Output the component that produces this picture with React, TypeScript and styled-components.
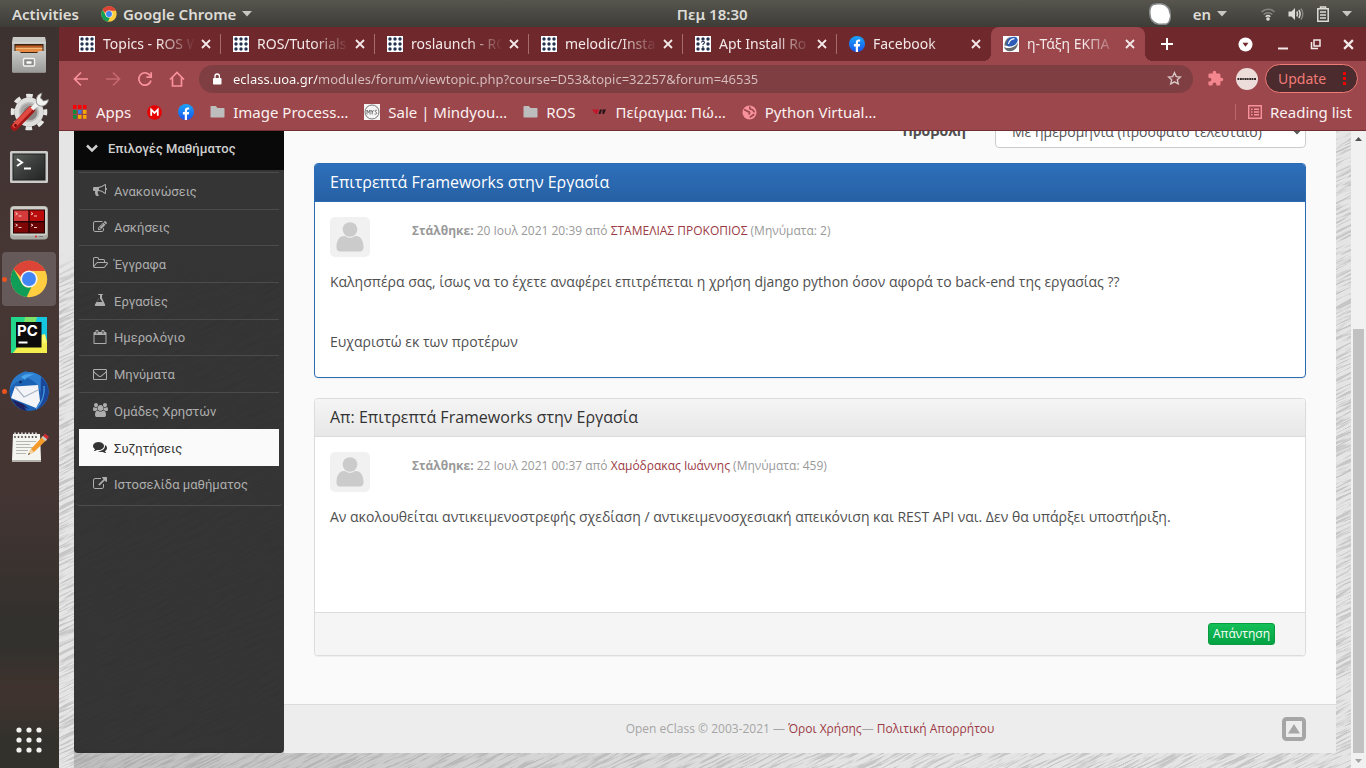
import React from "react";
import styled, { createGlobalStyle, css } from "styled-components";

const pageFont = `"Open Sans", "Noto Sans", sans-serif`;
const uiFont = `"Noto Sans", "Open Sans", sans-serif`;
const menuFont = `Roboto, "Noto Sans", sans-serif`;

const GlobalStyle = createGlobalStyle`
  *, *::before, *::after { box-sizing: border-box; }
  body { margin: 0; font-family: ${uiFont}; }
  button, input, select { font: inherit; color: inherit; }
  button { padding: 0; border: 0; background: none; }
  svg { display: block; flex: none; }
`;

const Desktop = styled.div`
  display: flex;
  flex-direction: column;
  height: 100vh;
  overflow: hidden;
`;

/* ---------- system bar ---------- */

const SystemBar = styled.header`
  display: grid;
  grid-template-columns: 11fr auto 10fr;
  align-items: center;
  flex: none;
  height: 27px;
  padding: 0 14px 0 12px;
  background: linear-gradient(#57554e, #3d3c37);
  color: #dedcd7;
  font-size: 15px;
  font-weight: 600;
  line-height: 20px;
`;

const BarGroup = styled.div<{ $end?: boolean }>`
  display: flex;
  align-items: center;
  gap: 22px;
  justify-content: ${(p) => (p.$end ? "flex-end" : "flex-start")};
`;

const BarButton = styled.button`
  display: flex;
  align-items: center;
  gap: 6px;
  font-weight: 600;
`;

const Tray = styled.button`
  display: flex;
  align-items: center;
  gap: 12px;
  margin-left: 11px;
`;

/* ---------- dock ---------- */

const Workspace = styled.div`
  display: flex;
  flex: 1;
  min-height: 0;
`;

const Dock = styled.nav`
  display: flex;
  flex-direction: column;
  gap: 2px;
  flex: none;
  width: 59px;
  padding: 1px 3px 0 2px;
  background: linear-gradient(
    #3c3230 0%,
    #463634 30%,
    #443533 62%,
    #33312d 80%,
    #33312d 84%,
    #40332f 90%,
    #33312c 96%
  );
`;

const DockItem = styled.button<{ $active?: boolean; $running?: boolean; $last?: boolean }>`
  position: relative;
  display: grid;
  place-items: center;
  height: 54px;
  border-radius: 4px;
  ${(p) => p.$active && css`background: #655959;`}
  ${(p) => p.$last && css`margin-top: auto; margin-bottom: 1px;`}
  ${(p) =>
    p.$running &&
    css`
      &::before {
        content: "";
        position: absolute;
        left: 0;
        top: 25px;
        width: 5px;
        height: 5px;
        border-radius: 50%;
        background: #e95420;
      }
    `}
`;

/* ---------- browser ---------- */

const Browser = styled.div`
  display: flex;
  flex-direction: column;
  flex: 1;
  min-width: 0;
`;

const TabStrip = styled.div`
  display: flex;
  align-items: center;
  flex: none;
  height: 34px;
  padding: 0 9px 0 8px;
  background: #6f282c;
  color: #f3e9e9;
`;

const Tab = styled.div<{ $active?: boolean; $divider?: boolean }>`
  display: flex;
  align-items: center;
  flex: 0 1 154px;
  min-width: 0;
  height: 34px;
  padding: 0 5px 0 12px;
  ${(p) =>
    p.$divider &&
    css`
      background: linear-gradient(#a56c6e, #a56c6e) right 0 center / 1px 20px no-repeat;
    `}
  ${(p) =>
    p.$active &&
    css`
      position: relative;
      background: #9b474c;
      border-radius: 8px 8px 0 0;
      &::before,
      &::after {
        content: "";
        position: absolute;
        bottom: 0;
        width: 8px;
        height: 8px;
      }
      &::before {
        left: -8px;
        background: radial-gradient(circle at 0 0, transparent 8px, #9b474c 8px);
      }
      &::after {
        right: -8px;
        background: radial-gradient(circle at 100% 0, transparent 8px, #9b474c 8px);
      }
    `}
`;

const TabTitle = styled.button`
  display: flex;
  align-items: center;
  gap: 8px;
  flex: 1;
  min-width: 0;
  text-align: left;
  font-size: 14px;
  line-height: 20px;
`;

const FadedText = styled.span`
  flex: 1;
  overflow: hidden;
  white-space: nowrap;
  mask-image: linear-gradient(to right, #000 calc(100% - 36px), transparent);
`;

const CloseTab = styled.button`
  display: grid;
  place-items: center;
  flex: none;
  width: 20px;
  height: 20px;
  margin-left: 1px;
`;

const NewTab = styled.button`
  display: grid;
  place-items: center;
  width: 28px;
  height: 28px;
  margin-left: 8px;
`;

const WindowControls = styled.div`
  display: flex;
  align-items: center;
  gap: 16px;
  margin-left: auto;
`;

const ControlButton = styled.button<{ $wide?: boolean }>`
  display: grid;
  place-items: center start;
  justify-items: ${(p) => (p.$wide ? "start" : "center")};
  width: ${(p) => (p.$wide ? 20 : 17)}px;
  height: 17px;
`;

const Toolbar = styled.div`
  display: flex;
  align-items: center;
  flex: none;
  height: 35px;
  padding: 0 8px 0 14px;
  background: #9b474c;
  color: #f9919a;
`;

const NavButtons = styled.div`
  display: flex;
  gap: 16px;
  margin-right: 14px;
`;

const Omnibox = styled.div`
  display: flex;
  align-items: center;
  flex: 1;
  height: 28px;
  padding: 0 11px 0 12px;
  border-radius: 14px;
  background: #7f3f42;
  color: #e6d6d6;
`;

const Address = styled.input`
  flex: 1;
  min-width: 0;
  margin-left: 10px;
  padding: 0;
  border: 0;
  outline: 0;
  font-size: 13px;
  line-height: 20px;
  color: transparent;
  background: linear-gradient(to right, #ffffff 84px, #d8bfc0 84px);
  background-clip: text;
`;

const Extensions = styled.div`
  display: flex;
  align-items: center;
  gap: 12px;
  margin: 0 7px 0 14px;
`;

const UpdateButton = styled.button`
  display: flex;
  align-items: center;
  justify-content: space-between;
  width: 93px;
  height: 29px;
  padding: 0 11px 0 12px;
  border: 1px solid #f27b76;
  border-radius: 15px;
  background: #4b2b2d;
  color: #ef7b76;
  font-size: 14px;
`;

const Bookmarks = styled.nav`
  display: flex;
  align-items: center;
  gap: 16px;
  flex: none;
  height: 35px;
  padding: 0 14px 2px;
  border-bottom: 1px solid #712f34;
  background: #9b474c;
`;

const Bookmark = styled.a<{ $reading?: boolean }>`
  display: flex;
  align-items: center;
  gap: 8px;
  color: #fbf1f1;
  font-size: 15px;
  line-height: 20px;
  text-decoration: none;
  white-space: nowrap;
  ${(p) =>
    p.$reading &&
    css`
      margin-left: auto;
      padding-left: 12px;
      border-left: 1px solid #bb686c;
      line-height: 16px;
    `}
`;

/* ---------- web page ---------- */

const Viewport = styled.div`
  position: relative;
  display: flex;
  flex: 1;
  min-height: 0;
  overflow: hidden;
  background: #e5e5e5;
`;

const Texture = styled.svg`
  position: absolute;
  inset: 0;
  width: 100%;
  height: 100%;
`;

const Page = styled.div`
  position: relative;
  display: flex;
  flex: 1;
  min-width: 0;
  padding: 0 15px 15px;
`;

const Sidebar = styled.aside`
  flex: none;
  width: 210px;
  border-radius: 0 0 4px 4px;
  background: rgba(43, 43, 43, 0.95);
  font-family: ${menuFont};
  font-size: 13px;
`;

const MenuHeading = styled.button`
  display: flex;
  align-items: center;
  gap: 10px;
  width: 100%;
  height: 39px;
  padding: 0 12px 5px;
  background: #090909;
  color: #cfcfcf;
  font-size: 13px;
  font-weight: 500;
`;

const MenuList = styled.ul`
  display: grid;
  grid-auto-rows: 1fr;
  height: 336px;
  margin: 0 2px;
  padding: 2px 3px 3px;
  border-bottom: 1px solid #4d4d4d;
  border-radius: 0 0 4px 4px;
  list-style: none;
`;

const MenuLink = styled.a<{ $active?: boolean }>`
  display: flex;
  align-items: center;
  gap: 6px;
  height: 100%;
  padding: 2px 14px 0;
  border-top: 1px solid #4b4b4b;
  color: #adadad;
  line-height: 20px;
  text-decoration: none;
  ${(p) =>
    p.$active &&
    css`
      position: relative;
      height: calc(100% + 1px);
      border-color: #fafafa;
      background: #fafafa;
      color: #333;
    `}
`;

const Content = styled.div`
  display: flex;
  flex-direction: column;
  flex: 1;
  min-width: 0;
  overflow: hidden;
  border-radius: 0 0 4px 0;
  background: #fafafa;
  color: #4f4f4f;
  font-family: ${pageFont};
  font-size: 14px;
  line-height: 20px;
`;

const Topic = styled.main`
  flex: 1;
  padding: 0 30px;
`;

/* The page is scrolled, so the top half of this row is above the visible area. */
const ViewMode = styled.div`
  display: flex;
  justify-content: flex-end;
  align-items: center;
  gap: 29px;
  margin: -17px 0 15px;
  label {
    font-weight: 700;
  }
`;

const ModeSelect = styled.select`
  width: 311px;
  height: 34px;
  padding: 6px 12px;
  border: 1px solid #ccc;
  border-radius: 4px;
  background-color: #fff;
  color: #555;
  font-size: 14px;
`;

const Post = styled.article<{ $primary?: boolean }>`
  margin-bottom: 20px;
  border: 1px solid ${(p) => (p.$primary ? "#2b6cb4" : "#dcdcdc")};
  border-radius: 4px;
  background: #fff;
  box-shadow: 0 1px 1px rgba(0, 0, 0, 0.05);
  overflow: hidden;
`;

const PostTitle = styled.h3<{ $primary?: boolean }>`
  margin: 0;
  height: 38px;
  padding: 0 15px;
  border-bottom: 1px solid ${(p) => (p.$primary ? "#2b6cb4" : "#dcdcdc")};
  background: ${(p) =>
    p.$primary ? "linear-gradient(#2d70bb, #2760a4)" : "linear-gradient(#f5f5f5, #e7e7e7)"};
  color: ${(p) => (p.$primary ? "#fff" : "#333")};
  font-size: 16px;
  font-weight: 400;
  line-height: 36px;
`;

const PostBody = styled.div<{ $tall?: boolean }>`
  padding: 15px 15px ${(p) => (p.$tall ? 85 : 25)}px;
  p {
    margin: 0 0 40px;
  }
  p:last-child {
    margin: 0;
  }
`;

const PostInfo = styled.div`
  display: flex;
  gap: 42px;
  margin-bottom: 15px;
  color: #999;
  font-size: 12px;
  line-height: 28px;
`;

const PostFooter = styled.footer`
  display: flex;
  justify-content: flex-end;
  padding: 10px 30px;
  border-top: 1px solid #dcdcdc;
  background: #f5f5f5;
`;

const ReplyButton = styled.button`
  height: 22px;
  padding: 0 4px;
  border: 1px solid #0a9a3f;
  border-radius: 3px;
  background: linear-gradient(#14bf58, #04a244);
  color: #fff;
  font-size: 12px;
  line-height: 20px;
`;

const RedLink = styled.a`
  color: #9b3a44;
  text-decoration: none;
`;

const SiteFooter = styled.footer`
  display: grid;
  grid-template-columns: 24px 1fr 24px;
  align-items: center;
  height: 49px;
  padding: 0 30px;
  border-top: 1px solid #dcdcdc;
  background: #ededed;
  color: #a5a5a5;
  font-size: 12px;
  text-align: center;
`;

const ScrollBar = styled.div`
  position: relative;
  display: flex;
  flex-direction: column;
  flex: none;
  width: 15px;
  background: #f1f1f1;
`;

const ScrollButton = styled.button`
  display: grid;
  place-items: center;
  flex: none;
  width: 15px;
  height: 15px;
`;

const ScrollSpace = styled.div`
  flex: 183;
`;

const ScrollThumb = styled.div`
  flex: 424;
  margin: 0 2px;
  background: #c1c1c1;
`;

/* ---------- drawings ---------- */

const Caret = () => (
  <svg width="10" height="6" viewBox="0 0 10 6" fill="#c9c7c2"><path d="M0 0h10L5 5.5z" /></svg>
);

const ChromeLogo = ({ size }: { size: number }) => (
  <svg width={size} height={size} viewBox="0 0 48 48">
    <circle cx="24" cy="24" r="23" fill="#ffcd40" />
    <path d="M4.600 11.500A23 23 0 0 1 44.300 13.500H24a10.500 10.500 0 0 0-9.500 6z" fill="#db4437" />
    <path d="M4.600 11.500 14.900 29.250A10.500 10.500 0 0 0 27 34L21 46.800A23 23 0 0 1 4.600 11.500z" fill="#0f9d58" />
    <path d="M4.600 11.500A23 23 0 0 1 44.300 13.500H24c-5 0-9 3-10.300 8z" fill="#db4437" />
    <circle cx="24" cy="24" r="10.800" fill="#f4f4f4" />
    <circle cx="24" cy="24" r="8.800" fill="#4285f4" />
  </svg>
);

const RosIcon = ({ question }: { question?: boolean }) => (
  <svg width="16" height="16" viewBox="0 0 16 16">
    <rect width="16" height="16" fill="#fff" />
    {[3, 8, 13].map((y) =>
      [3, 8, 13].map((x) =>
        question && x === 8 && y === 8 ? null : (
          <circle key={`${x}-${y}`} cx={x} cy={y} r="1.700" fill="#22314e" />
        )
      )
    )}
    {question && (
      <path d="M6.500 6.500q0-1.300 1.500-1.300t1.500 1.300q0 .8-1.500 1.700v.8M8 10v1.200" fill="none" stroke="#22314e" strokeWidth="1.100" />
    )}
  </svg>
);

const FacebookIcon = () => (
  <svg width="16" height="16" viewBox="0 0 16 16">
    <defs>
      <linearGradient id="fb" x2="0" y2="1">
        <stop stopColor="#19a5fb" />
        <stop offset="1" stopColor="#1a54ea" />
      </linearGradient>
    </defs>
    <circle cx="8" cy="8" r="8" fill="url(#fb)" />
    <path d="M6.800 16v-5.600H4.900V8.100h1.900V6.600c0-2.100 1.200-3.200 3-3.200.7 0 1.400.1 1.400.1v1.900h-1c-.9 0-1.200.6-1.200 1.200v1.500h2.100l-.4 2.300H9V16z" fill="#fff" />
  </svg>
);

const EclassIcon = () => (
  <svg width="16" height="16" viewBox="0 0 16 16">
    <rect width="16" height="16" fill="#fff" />
    <path d="M2.500 9C2 4.500 6 .8 11 .8c3.500 0 4.500 3 3 5.700-1.500 2.600-5 4.300-8.500 4z" fill="#2c5cb8" />
    <path d="M5.500 8C6 5 8.500 2.800 11.500 2.600" fill="none" stroke="#fff" strokeWidth="1.100" />
    <path d="M1 10.500c1.500 1.500 4 1.800 7 1.200 3-.7 5.500-2.500 7-5-.3 4.800-3.500 8.300-8 8.500-3 .1-5.500-1.500-6-4.700z" fill="#63696d" />
    <path d="M1.500 9.500C1.500 5 4 1.500 8 .7 5 2.500 3.200 5.500 3.500 10z" fill="#63696d" />
  </svg>
);

const CrossIcon = ({ size = 10, width = 1.8 }: { size?: number; width?: number }) => (
  <svg width={size} height={size} viewBox="0 0 10 10" stroke="currentColor" strokeWidth={width} fill="none">
    <path d="M1 1l8 8M9 1l-8 8" />
  </svg>
);

const FolderIcon = () => (
  <svg width="15" height="14" viewBox="0 0 15 14" fill="#bdbdbd">
    <path d="M1.500 1h4.300l1.700 2h6c.6 0 1 .4 1 1v7.500c0 .6-.4 1-1 1h-12c-.6 0-1-.4-1-1V2c0-.6.4-1 1-1z" />
  </svg>
);

const AppsIcon = () => {
  const colors = ["#f00", "#f00", "#f00", "#0a8f3c", "#3b78e7", "#f5a800", "#0a8f3c", "#f5a800", "#f5a800"];
  return (
    <svg width="15" height="14" viewBox="0 0 15 14">
      {colors.map((c, i) => (
        <rect key={i} x={(i % 3) * 5} y={Math.floor(i / 3) * 5} width="3.500" height="3.800" fill={c} />
      ))}
    </svg>
  );
};

const NavIcon = ({ d, dim }: { d: string; dim?: boolean }) => (
  <svg width="16" height="16" viewBox="0 0 16 16" fill="none" stroke="currentColor" strokeWidth="1.700" opacity={dim ? 0.45 : 1}>
    <path d={d} />
  </svg>
);

const Avatar = () => (
  <svg width="40" height="40" viewBox="0 0 40 40" role="img" aria-label="Χρήστης">
    <rect width="40" height="40" rx="5" fill="#f1f1f1" />
    <circle cx="20" cy="12.500" r="7.300" fill="#cbcbcb" />
    <path d="M6.500 30c0-6.500 3-11 7.500-11 2 0 2.500 1.700 6 1.700s4-1.700 6-1.700c4.500 0 7.500 4.500 7.500 11 0 3.500-1.500 4.500-4 4.500h-19c-2.500 0-4-1-4-4.500z" fill="#cbcbcb" />
  </svg>
);

const FilesIcon = () => (
  <svg width="40" height="40" viewBox="0 0 40 40">
    <defs>
      <linearGradient id="metal" x2="0" y2="1">
        <stop stopColor="#c9c9c7" />
        <stop offset="1" stopColor="#9a9a98" />
      </linearGradient>
    </defs>
    <path d="M4 2h32l1 7v27a1.500 1.500 0 0 1-1.500 1.500h-31A1.500 1.500 0 0 1 3 36V9z" fill="#b9b9b6" />
    <path d="M4 2h32l1 6H3z" fill="#c9c9c7" />
    <path d="M3 8h34" stroke="#dededc" />
    <rect x="5.500" y="9" width="29" height="9" fill="#3c2412" />
    <path d="M6.500 10.500h27v2h-27z" fill="#c65a1c" />
    <path d="M6.500 12.500h27v1.500h-27z" fill="#f6b878" />
    <path d="M6.500 14h27v3h-27z" fill="#e48a45" />
    <path d="M3 16h7l2 2h16l2-2h7v20.500a1 1 0 0 1-1 1H4a1 1 0 0 1-1-1z" fill="url(#metal)" />
    <rect x="14.500" y="23.500" width="11" height="7.500" rx="1" fill="#8c8c8a" stroke="#f4f4f2" strokeWidth="1.400" />
    <path d="M17.500 27.500h5" stroke="#fff" strokeWidth="2.400" />
  </svg>
);

const ToolsIcon = () => (
  <svg width="40" height="40" viewBox="0 0 40 40">
    <circle cx="20" cy="21" r="16.300" fill="none" stroke="#e6e6e4" strokeWidth="4" strokeDasharray="6.600 6.200" strokeDashoffset="3.300" />
    <circle cx="20" cy="21" r="14.500" fill="#dededc" />
    <circle cx="20" cy="21" r="9.500" fill="#a7a5a3" stroke="#c3c3c1" strokeWidth="1.500" />
    <circle cx="21" cy="22" r="7" fill="#8a8482" />
    <path d="M5.500 36 22 19" stroke="#a31816" strokeWidth="7.500" strokeLinecap="round" />
    <path d="M5.500 34.500 21.500 18" stroke="#e04a42" strokeWidth="4.500" strokeLinecap="round" />
    <path d="M23 18l7-7" stroke="#f0f0ee" strokeWidth="4" />
    <path d="M28 13c-2-5 0-10 5-11l-1.500 5 3 3 5-1.500c-.5 5-5 8-9.500 6z" fill="#f2f2f0" stroke="#777573" strokeWidth=".8" />
    <circle cx="6.500" cy="34.500" r="1.400" fill="#6f0b0b" />
  </svg>
);

const TerminalIcon = () => (
  <svg width="40" height="34" viewBox="0 0 40 34">
    <defs>
      <linearGradient id="screen" x2="1" y2="1">
        <stop stopColor="#5b5f5c" />
        <stop offset=".5" stopColor="#3a3d3b" />
        <stop offset="1" stopColor="#232524" />
      </linearGradient>
    </defs>
    <rect x="1" y="1" width="38" height="32" rx="1.500" fill="#cbcbc9" />
    <rect x="3.500" y="3.500" width="33" height="27" fill="#1d1f1e" />
    <rect x="4.500" y="4.500" width="31" height="25" fill="url(#screen)" />
    <path d="M8 9l5 3.500-5 3.500M15 18.500h7" stroke="#fff" strokeWidth="2" fill="none" />
  </svg>
);

const TerminatorIcon = () => (
  <svg width="40" height="36" viewBox="0 0 40 36">
    <rect x="1" y="1" width="38" height="33.500" rx="4" fill="#a9aaa4" />
    <rect x="2" y="1.500" width="36" height="29" rx="3" fill="#cfcfca" />
    <rect x="4" y="4.500" width="32" height="24" fill="#250303" />
    <rect x="5" y="5.500" width="14.300" height="10.500" fill="#d43a3a" />
    <rect x="20.700" y="5.500" width="14.300" height="10.500" fill="#bb0c0c" />
    <rect x="5" y="17.500" width="14.300" height="10" fill="#7e0606" />
    <rect x="20.700" y="17.500" width="14.300" height="10" fill="#6a0404" />
    <g stroke="#ffdede" strokeWidth=".9" fill="none">
      <path d="M6.500 7.500l2 1.200-2 1.200M9.500 11h3M22 7.500l2 1.200-2 1.200M25 11h3M6.500 19l2 1.200-2 1.200M9.500 22.500h3M22 19l2 1.200-2 1.200M25 22.500h3" />
    </g>
    <circle cx="27" cy="31.500" r="1" fill="#d22" />
    <path d="M30 31.500h4" stroke="#777" />
  </svg>
);

const PyCharmIcon = () => (
  <svg width="36" height="36" viewBox="0 0 36 36">
    <rect width="36" height="36" fill="#21d789" />
    <path d="M20 0h16v22L26 14z" fill="#14c6e0" />
    <path d="M14 0h12l-2 8-12 2z" fill="#7fe06a" />
    <path d="M30 20l6 4v12H2l6-8z" fill="#f3ee4e" />
    <path d="M30 18l4-1 2 8-4 2z" fill="#f9f871" />
    <rect x="5" y="5" width="25.500" height="25.500" fill="#0b0b0b" />
    <text x="6" y="19" fill="#fff" fontFamily="Inter, sans-serif" fontSize="15" fontWeight="700">PC</text>
    <rect x="7.500" y="24.500" width="9" height="2" fill="#fff" />
  </svg>
);

const ThunderbirdIcon = () => (
  <svg width="42" height="42" viewBox="0 0 42 42">
    <circle cx="21" cy="21.500" r="19.500" fill="#1c62b4" />
    <path d="M20 2c11 0 20 8 20.500 19C41 31 34 38 26 40.500c5-4 8-9 7-16C31 13 24 8 12 6z" fill="#2f7fd0" />
    <path d="M33 7c6 5 9 12 7 20-2 6-7 11-14 13.500 5-6 7-11 6.500-17z" fill="#1b479a" />
    <path d="M36 16c1 8-2 17-8 23" fill="none" stroke="#3f95e0" strokeWidth="1.500" />
    <path d="M2 20C2 11 8 4 17 1.500 19 1 20 2 18 4c-2 1-3 3-3 6-6 1-11 4-13 10z" fill="#2a78c6" />
    <path d="M13 7c3-2.500 8-4 14-2-4 0-8 1.500-10 5z" fill="#4ba3ea" />
    <circle cx="12.500" cy="12" r="1.200" fill="#0c2350" />
    <path d="M7 16.500l23-1.500 2 16-4 7L3 28z" fill="#f3f4f8" />
    <path d="M7 16.500l9 10.500 14-7" fill="none" stroke="#aab4c4" strokeWidth="1.200" />
    <path d="M4 29.500c3 6 8 10 15 11.500l-3-4 5 2-6-5z" fill="#20205f" />
  </svg>
);

const NotesIcon = () => (
  <svg width="40" height="36" viewBox="0 0 40 36">
    <path d="M4 5h27l1 26H3z" fill="#f4f4f1" />
    <path d="M3 31h29v2H3z" fill="#b3b3ac" />
    <g stroke="#b7b7b2" strokeWidth="1">
      <path d="M7 12.500h20M7 15.500h14M7 18.500h17M7 21.500h12M7 24.500h10" />
    </g>
    <g stroke="#ececec" strokeWidth="1.500" fill="none">
      <path d="M6 8V3.500M9.500 8V3.500M13 8V3.500M16.500 8V3.500M20 8V3.500M23.500 8V3.500M27 8V3.500" />
    </g>
    <g fill="#4a4644">
      {[6, 9.5, 13, 16.5, 20, 23.5, 27].map((x) => <circle key={x} cx={x} cy="8" r=".9" />)}
    </g>
    <path d="M19 26l3-6L34 7l4 3.500L25 23z" fill="#f39a2b" />
    <path d="M34 7l2-2.500 4 3.500-2 2.500z" fill="#cf2f34" />
    <path d="M32.500 8.500L34 7l4 3.500-1.500 1.700z" fill="#c9c9c9" />
    <path d="M22 20l3 3-6 3z" fill="#eed3a6" />
    <path d="M20 24l1 1-2 1z" fill="#222" />
  </svg>
);

const AppGridIcon = () => (
  <svg width="28" height="28" viewBox="0 0 28 28" fill="#f1f1ef">
    {[4, 14, 24].map((y) => [4, 14, 24].map((x) => <circle key={`${x}-${y}`} cx={x} cy={y} r="2.600" />))}
  </svg>
);

type MenuEntry = { label: string; d: string; box?: number; width?: number; active?: boolean };

const menu: MenuEntry[] = [
  { label: "Ανακοινώσεις", d: "M1664 640q53 0 90.5 37.5t37.5 90.5-37.5 90.5-90.5 37.5v384q0 52-38 90t-90 38q-417-347-812-380-58 19-91 66t-31 100.5 40 92.5q-20 33-23 65.5t6 58 33.5 55 48 50 61.5 50.5q-29 58-111.5 83t-168.5 11.5-132-55.5q-7-23-29.5-87.5t-32-94.5-23-89-15-101 3.5-98.5 22-110.5h-122q-66 0-113-47t-47-113v-192q0-66 47-113t113-47h480q435 0 896-384 52 0 90 38t38 90v384zm-128 604v-954q-394 302-768 343v270q377 42 768 341z" },
  { label: "Ασκήσεις", d: "M888 1184l116-116-152-152-116 116v56h96v96h56zm440-720q-16-16-33 1l-350 350q-17 17-1 33t33-1l350-350q17-17 1-33zm80 594v190q0 119-84.5 203.5t-203.5 84.5h-832q-119 0-203.5-84.5t-84.5-203.5v-832q0-119 84.5-203.5t203.5-84.5h832q63 0 117 25 15 7 18 23 3 17-9 29l-49 49q-14 14-32 8-23-6-45-6h-832q-66 0-113 47t-47 113v832q0 66 47 113t113 47h832q66 0 113-47t47-113v-126q0-13 9-22l64-64q15-15 35-7t20 29zm-96-738l288 288-672 672h-288v-288zm444 132l-92 92-288-288 92-92q28-28 68-28t68 28l152 152q28 28 28 68t-28 68z" },
  { label: "Έγγραφα", box: 1920, width: 15, d: "M1781 803q0-35-53-35h-1088q-40 0-85.5 21.5t-71.5 52.5l-294 363q-18 24-18 40 0 35 53 35h1088q40 0 86-22t71-53l294-363q18-22 18-39zm-1141-163h768v-160q0-40-28-68t-68-28h-576q-40 0-68-28t-28-68v-64q0-40-28-68t-68-28h-320q-40 0-68 28t-28 68v853l256-315q44-53 116-87.5t140-34.5zm1269 163q0 62-46 120l-295 363q-43 53-116 87.5t-140 34.5h-1088q-92 0-158-66t-66-158v-960q0-92 66-158t158-66h320q92 0 158 66t66 158v32h544q92 0 158 66t66 158v160h192q54 0 99 24.5t67 70.5q15 32 15 68z" },
  { label: "Εργασίες", d: "M1527 1447q56 89 21.5 153t-140.5 64h-1024q-106 0-140.5-64t21.5-153l503-793v-399h-64q-26 0-45-19t-19-45 19-45 45-19h512q26 0 45 19t19 45-19 45-45 19h-64v399zm-779-725l-272 430h712l-272-430-20-31v-436h-128v436z" },
  { label: "Ημερολόγιο", d: "M192 1664h1408v-1024h-1408v1024zm384-1216v-288q0-14-9-23t-23-9h-64q-14 0-23 9t-9 23v288q0 14 9 23t23 9h64q14 0 23-9t9-23zm768 0v-288q0-14-9-23t-23-9h-64q-14 0-23 9t-9 23v288q0 14 9 23t23 9h64q14 0 23-9t9-23zm384-64v1280q0 52-38 90t-90 38h-1408q-52 0-90-38t-38-90v-1280q0-52 38-90t90-38h128v-96q0-66 47-113t113-47h64q66 0 113 47t47 113v96h384v-96q0-66 47-113t113-47h64q66 0 113 47t47 113v96h128q52 0 90 38t38 90z" },
  { label: "Μηνύματα", d: "M1664 1504v-768q-32 36-69 66-268 206-426 338-51 43-83 67t-86.5 48.5-102.5 24.5h-2q-48 0-102.5-24.5t-86.500-48.5-83-67q-158-132-426-338-37-30-69-66v768q0 13 9.5 22.5t22.5 9.5h1472q13 0 22.5-9.5t9.500-22.5zm0-1051v-24.5l-.5-13-3-12.5-5.5-9-9-7.5-14-2.5h-1472q-13 0-22.5 9.5t-9.5 22.5q0 168 147 284 193 152 401 317 6 5 35 29.5t46 37.5 44.5 31.5 50.5 27.5 43 9h2q20 0 43-9t50.5-27.5 44.5-31.5 46-37.5 35-29.5q208-165 401-317 54-43 100.5-115.5t46.5-131.5zm128-37v1088q0 66-47 113t-113 47h-1472q-66 0-113-47t-47-113v-1088q0-66 47-113t113-47h1472q66 0 113 47t47 113z" },
  { label: "Ομάδες Χρηστών", box: 1920, width: 15, d: "M593 896q-162 5-265 128h-134q-82 0-138-40.5t-56-118.5q0-353 124-353 6 0 43.5 21t97.5 42.5 119 21.5q67 0 133-23-5 37-5 66 0 139 81 256zm1071 637q0 120-73 189.5t-194 69.5h-874q-121 0-194-69.5t-73-189.5q0-53 3.5-103.5t14-109 26.5-108.5 43-97.5 62-81 85.5-53.5 111.5-20q10 0 43 21.5t73 48 107 48 135 21.5 135-21.5 107-48 73-48 43-21.5q61 0 111.5 20t85.5 53.5 62 81 43 97.5 26.5 108.5 14 109 3.5 103.5zm-1024-1277q0 106-75 181t-181 75-181-75-75-181 75-181 181-75 181 75 75 181zm704 384q0 159-112.5 271.5t-271.5 112.5-271.5-112.5-112.5-271.5 112.5-271.5 271.5-112.5 271.5 112.5 112.5 271.5zm576 225q0 78-56 118.5t-138 40.5h-134q-103-123-265-128 81-117 81-256 0-29-5-66 66 23 133 23 59 0 119-21.5t97.5-42.5 43.5-21q124 0 124 353zm-128-609q0 106-75 181t-181 75-181-75-75-181 75-181 181-75 181 75 75 181z" },
  { label: "Συζητήσεις", active: true, d: "M1408 768q0 139-94 257t-256.5 186.5-353.5 68.5q-86 0-176-16-124 88-278 128-36 9-86 16h-3q-11 0-20.5-8t-11.5-21q-1-3-1-6.5t.5-6.5 2-6l2.5-5 3.5-5.5 4-5 4.5-5 4-4.5q5-6 23-25t26-29.5 22.5-29 25-38.5 20.500-44q-124-72-195-177t-71-224q0-139 94-257t256.5-186.5 353.5-68.5 353.5 68.5 256.5 186.5 94 257zm384 256q0 120-71 224.5t-195 176.5q10 24 20.5 44t25 38.5 22.5 29 26 29.5 23 25q1 1 4 4.5t4.5 5 4 5 3.5 5.5l2.5 5 2 6 .5 6.5-1 6.5q-3 14-13 22t-22 7q-50-7-86-16-154-40-278-128-90 16-176 16-271 0-472-132 58 4 88 4 161 0 309-45t264-129q125-92 192-212t67-254q0-77-23-152 129 71 204 178t75 230z" },
  { label: "Ιστοσελίδα μαθήματος", d: "M1408 928v320q0 119-84.5 203.5t-203.5 84.5h-832q-119 0-203.5-84.5t-84.5-203.5v-832q0-119 84.5-203.5t203.5-84.5h704q14 0 23 9t9 23v64q0 14-9 23t-23 9h-704q-66 0-113 47t-47 113v832q0 66 47 113t113 47h832q66 0 113-47t47-113v-320q0-14 9-23t23-9h64q14 0 23 9t9 23zm384-864v512q0 26-19 45t-45 19-45-19l-176-176-652 652q-10 10-23 10t-23-10l-114-114q-10-10-10-23t10-23l652-652-176-176q-19-19-19-45t19-45 45-19h512q26 0 45 19t19 45z" },
];

const MenuIconCell = styled.span`
  flex: none;
  width: 15px;
  padding-bottom: 3px;
`;

const MenuIcon = ({ d, box = 1792, width = 14 }: MenuEntry) => (
  <MenuIconCell>
    <svg width={width} height="14" viewBox={`0 0 ${box} 1792`} fill="currentColor"><path d={d} /></svg>
  </MenuIconCell>
);

const tabs = [
  { title: "Topics - ROS W", icon: <RosIcon /> },
  { title: "ROS/Tutorials", icon: <RosIcon /> },
  { title: "roslaunch - RO", icon: <RosIcon /> },
  { title: "melodic/Insta", icon: <RosIcon /> },
  { title: "Apt Install Ro", icon: <RosIcon question /> },
  { title: "Facebook", icon: <FacebookIcon /> },
  { title: "η-Τάξη ΕΚΠΑ", icon: <EclassIcon />, active: true },
];

type PostProps = {
  title: string;
  date: string;
  author: string;
  count: number;
  paragraphs: string[];
  primary?: boolean;
  reply?: boolean;
};

const ForumPost = ({ title, date, author, count, paragraphs, primary, reply }: PostProps) => (
  <Post $primary={primary}>
    <PostTitle $primary={primary}>{title}</PostTitle>
    <PostBody $tall={reply}>
      <PostInfo>
        <Avatar />
        <span>
          <b>Στάλθηκε:</b> {date} από <RedLink href="#author">{author}</RedLink> (Μηνύματα: {count})
        </span>
      </PostInfo>
      {paragraphs.map((text) => (
        <p key={text}>{text}</p>
      ))}
    </PostBody>
    {reply && (
      <PostFooter>
        <ReplyButton type="button">Απάντηση</ReplyButton>
      </PostFooter>
    )}
  </Post>
);

const BackgroundTexture = () => (
  <Texture aria-hidden="true">
    <defs>
      <filter id="scratches" x="0" y="0" width="100%" height="100%">
        <feTurbulence type="fractalNoise" baseFrequency="0.03 0.55" numOctaves="4" seed="7" />
        <feColorMatrix values="0 0 0 0 .52  0 0 0 0 .52  0 0 0 0 .52  6 0 0 0 -2.800" />
      </filter>
      <linearGradient id="calm" x2="0" y2="1">
        <stop offset=".19" stopColor="#e5e5e5" />
        <stop offset=".24" stopColor="#e5e5e5" stopOpacity="0" />
      </linearGradient>
      <linearGradient id="shade">
        <stop stopColor="#8f8f8f" stopOpacity=".45" />
        <stop offset="1" stopColor="#8f8f8f" stopOpacity="0" />
      </linearGradient>
    </defs>
    <g transform="rotate(-26)">
      <rect x="-500" y="-100" width="2000" height="1500" filter="url(#scratches)" opacity=".8" />
    </g>
    <rect width="225" height="100%" fill="url(#calm)" />
    <rect x="15" y="97%" width="60%" height="3%" fill="url(#shade)" />
  </Texture>
);

export default function App() {
  return (
    <Desktop>
      <GlobalStyle />
      <SystemBar>
        <BarGroup>
          <BarButton type="button">Activities</BarButton>
          <BarButton type="button">
            <ChromeLogo size={16} />
            Google Chrome
            <Caret />
          </BarButton>
        </BarGroup>
        <span>Πεμ 18:30</span>
        <BarGroup $end>
          <svg width="22" height="22" viewBox="0 0 22 22">
            <path d="M7 1c3-1 4 0 6 0 5 1 8 5 8 9 1 2 1 4 0 6 0 3-3 6-6 5-2 1-4 0-6 0-5-1-8-5-8-9C0 5 2 1 7 1z" fill="#fff" stroke="#85888a" strokeWidth="1.600" />
          </svg>
          <BarButton type="button">en <Caret /></BarButton>
          <Tray type="button" aria-label="System menu">
            <svg width="16" height="14" viewBox="0 0 16 14" fill="none" strokeWidth="1.600">
              <path d="M1.500 5a9 9 0 0 1 13 0M3.700 7.500a6 6 0 0 1 8.600 0" stroke="#85837e" />
              <path d="M5.700 9.800a3.300 3.300 0 0 1 4.600 0" stroke="#dedcd7" />
              <circle cx="8" cy="12" r="1.800" fill="#dedcd7" />
            </svg>
            <svg width="16" height="14" viewBox="0 0 16 14" fill="none" strokeWidth="1.500">
              <path d="M.5 4.500h3L7 1v12L3.500 9.500h-3z" fill="#dedcd7" />
              <path d="M8.800 4.500q1.500 2.500 0 5M10.800 3q2.600 4 0 8" stroke="#dedcd7" />
              <path d="M13 1.500q3.500 5.500 0 11" stroke="#85837e" />
            </svg>
            <svg width="14" height="16" viewBox="0 0 14 16" fill="none" stroke="#dedcd7" strokeWidth="1.500">
              <path d="M4.500 2.500V1h5v1.500M1.800 2.800h10.400v12.400H1.800zM4 6h6M4 9h6M4 12h6" />
            </svg>
            <Caret />
          </Tray>
        </BarGroup>
      </SystemBar>

      <Workspace>
        <Dock aria-label="Dock">
          <DockItem type="button" aria-label="Files"><FilesIcon /></DockItem>
          <DockItem type="button" aria-label="Settings"><ToolsIcon /></DockItem>
          <DockItem type="button" aria-label="Terminal"><TerminalIcon /></DockItem>
          <DockItem type="button" aria-label="Terminator"><TerminatorIcon /></DockItem>
          <DockItem type="button" aria-label="Google Chrome" $active $running><ChromeLogo size={38} /></DockItem>
          <DockItem type="button" aria-label="PyCharm"><PyCharmIcon /></DockItem>
          <DockItem type="button" aria-label="Thunderbird" $running><ThunderbirdIcon /></DockItem>
          <DockItem type="button" aria-label="Text editor"><NotesIcon /></DockItem>
          <DockItem type="button" aria-label="Show applications" $last><AppGridIcon /></DockItem>
        </Dock>

        <Browser>
          <TabStrip>
            {tabs.map((tab, i) => (
              <Tab key={tab.title} $active={tab.active} $divider={i < 5}>
                <TabTitle type="button">
                  {tab.icon}
                  <FadedText>{tab.title}</FadedText>
                </TabTitle>
                <CloseTab type="button" aria-label="Close tab"><CrossIcon /></CloseTab>
              </Tab>
            ))}
            <NewTab type="button" aria-label="New tab">
              <svg width="12" height="12" viewBox="0 0 12 12" stroke="#fff" strokeWidth="2"><path d="M6 0v12M0 6h12" /></svg>
            </NewTab>
            <WindowControls>
              <ControlButton type="button" aria-label="Search tabs" $wide>
                <svg width="15" height="15" viewBox="0 0 15 15"><circle cx="7.500" cy="7.500" r="7" fill="#fff" /><path d="M4.500 5.800h6l-3 4z" fill="#6f282c" /></svg>
              </ControlButton>
              <ControlButton type="button" aria-label="Minimize">
                <svg width="10" height="11" viewBox="0 0 10 11"><path d="M0 8.500h10v2H0z" fill="#f3e9e9" /></svg>
              </ControlButton>
              <ControlButton type="button" aria-label="Restore">
                <svg width="11" height="11" viewBox="0 0 11 11" fill="none" stroke="#f3e9e9" strokeWidth="1.500"><path d="M4 1h6v6H4zM1.500 3v6.500H8" /></svg>
              </ControlButton>
              <ControlButton type="button" aria-label="Close window"><CrossIcon size={11} width={2} /></ControlButton>
            </WindowControls>
          </TabStrip>

          <Toolbar>
            <NavButtons>
              <button type="button" aria-label="Back"><NavIcon d="M15 8H2M8 1.500 1.500 8 8 14.500" /></button>
              <button type="button" aria-label="Forward"><NavIcon dim d="M1 8h13M8 1.500 14.500 8 8 14.500" /></button>
              <button type="button" aria-label="Reload"><NavIcon d="M13.200 4.600A6.200 6.200 0 1 0 14 9.500M14.200 1.200v5H9.500" /></button>
              <button type="button" aria-label="Home"><NavIcon d="M1 8.500 8 1.500l7 7M3.500 6.500V15h9V6.500" /></button>
            </NavButtons>
            <Omnibox>
              <svg width="12" height="12" viewBox="0 0 12 12"><rect x="2" y="5" width="8.500" height="6.500" rx=".8" fill="#fff" /><path d="M4 5.500V3.200a2.200 2.200 0 0 1 4.400 0v2.300" fill="none" stroke="#fff" strokeWidth="1.300" /></svg>
              <Address type="text" aria-label="Address" defaultValue="eclass.uoa.gr/modules/forum/viewtopic.php?course=D53&topic=32257&forum=46535" />
              <svg width="15" height="15" viewBox="0 0 16 16" fill="none" stroke="#d9c6c7" strokeWidth="1.500"><path d="M8 1.800l1.900 4.200 4.500.4-3.400 3 1 4.400L8 11.500l-4 2.300 1-4.400-3.400-3 4.500-.4z" /></svg>
            </Omnibox>
            <Extensions>
              <svg width="17" height="17" viewBox="0 0 24 24" fill="#f4868f"><path d="M20.500 11H19V7a2 2 0 0 0-2-2h-4V3.500a2.500 2.500 0 0 0-5 0V5H4a2 2 0 0 0-2 2v3.800h1.500a2.700 2.700 0 0 1 0 5.400H2V20a2 2 0 0 0 2 2h3.800v-1.500a2.700 2.700 0 0 1 5.400 0V22H17a2 2 0 0 0 2-2v-4h1.500a2.500 2.500 0 0 0 0-5z" /></svg>
              <svg width="22" height="22" viewBox="0 0 22 22"><circle cx="11" cy="11" r="11" fill="#ecdcda" /><path d="M1.500 11h18.500" stroke="#2d2323" strokeWidth="2.200" strokeDasharray="1.500 .7 2.100 .5" /></svg>
            </Extensions>
            <UpdateButton type="button">
              Update
              <svg width="3" height="13" viewBox="0 0 3 13" fill="#f00000"><path d="M0 0h3v3H0zM0 5h3v3H0zM0 10h3v3H0z" /></svg>
            </UpdateButton>
          </Toolbar>

          <Bookmarks aria-label="Bookmarks">
            <Bookmark href="#apps"><AppsIcon />Apps</Bookmark>
            <Bookmark href="#m" aria-label="MEGA">
              <svg width="15" height="15" viewBox="0 0 16 16"><circle cx="8" cy="8" r="7.800" fill="#e60000" /><path d="M4.500 11.500V5L8 8.500 11.500 5v6.500" fill="none" stroke="#fff" strokeWidth="1.900" /></svg>
            </Bookmark>
            <Bookmark href="#facebook" aria-label="Facebook"><FacebookIcon /></Bookmark>
            <Bookmark href="#image"><FolderIcon />Image Process…</Bookmark>
            <Bookmark href="#sale">
              <svg width="16" height="16" viewBox="0 0 16 16"><rect width="16" height="16" fill="#f5f5f5" /><circle cx="8" cy="8" r="7" fill="none" stroke="#777" /><path d="M3 10.500V6l1.500 2.500L6 6v4.500M7 6l1.200 2.200L9.500 6M8.200 8v2.500M13 6.500c-2-1-2.700 1-1.200 1.500 1.700.6 1 3-1.200 2" fill="none" stroke="#555" strokeWidth=".8" /></svg>
              Sale | Mindyou…
            </Bookmark>
            <Bookmark href="#ros"><FolderIcon />ROS</Bookmark>
            <Bookmark href="#experiment">
              <svg width="16" height="16" viewBox="0 0 16 16"><path d="M1 5.500h7L6 10H4.500z" fill="#c4162a" /><path d="M9 5.500h2L9.500 10h-2zM11.500 5.500H15L13 10h-1.500z" fill="#231316" /></svg>
              Πείραγμα: Πώ…
            </Bookmark>
            <Bookmark href="#python">
              <svg width="15" height="15" viewBox="0 0 15 15"><circle cx="7.500" cy="7.500" r="7" fill="#f9919a" /><path d="M2 4.500c2 .5 3 2 4.500 2.200 1.500.3 1.500 2 0 2.600M8 1.500c-.5 2 0 3 2 3 1.500.2 1 2 2.800 2.500M12 9c-1 2-3 2-4 3.500" fill="none" stroke="#9b474c" strokeWidth="1.700" /></svg>
              Python Virtual…
            </Bookmark>
            <Bookmark href="#reading" $reading>
              <svg width="14" height="14" viewBox="0 0 14 14" fill="none" stroke="#f9919a" strokeWidth="1.400"><path d="M.7.700h12.600v12.600H.7zM3 4.200h1.500M6 4.200h5M3 7h1.500M6 7h5M3 9.800h1.500M6 9.800h5" /></svg>
              Reading list
            </Bookmark>
          </Bookmarks>

          <Viewport>
            <BackgroundTexture />
            <Page>
              <Sidebar>
                <MenuHeading type="button">
                  <svg width="12" height="9" viewBox="0 0 12 9" fill="none" stroke="#cfcfcf" strokeWidth="2.500"><path d="M1 1.500l5 5 5-5" /></svg>
                  Επιλογές Μαθήματος
                </MenuHeading>
                <MenuList>
                  {menu.map((item) => (
                    <li key={item.label}>
                      <MenuLink href="#menu" $active={item.active}>
                        <MenuIcon {...item} />
                        {item.label}
                      </MenuLink>
                    </li>
                  ))}
                </MenuList>
              </Sidebar>

              <Content>
                <Topic>
                  <ViewMode>
                    <label htmlFor="mode">Προβολή</label>
                    <ModeSelect id="mode">
                      <option>Με ημερομηνία (πρόσφατο τελευταίο)</option>
                    </ModeSelect>
                  </ViewMode>
                  <ForumPost
                    primary
                    title="Επιτρεπτά Frameworks στην Εργασία"
                    date="20 Ιουλ 2021 20:39"
                    author="ΣΤΑΜΕΛΙΑΣ ΠΡΟΚΟΠΙΟΣ"
                    count={2}
                    paragraphs={[
                      "Καλησπέρα σας, ίσως να το έχετε αναφέρει επιτρέπεται η χρήση django python όσον αφορά το back-end της εργασίας ??",
                      "Ευχαριστώ εκ των προτέρων",
                    ]}
                  />
                  <ForumPost
                    reply
                    title="Απ: Επιτρεπτά Frameworks στην Εργασία"
                    date="22 Ιουλ 2021 00:37"
                    author="Χαμόδρακας Ιωάννης"
                    count={459}
                    paragraphs={[
                      "Αν ακολουθείται αντικειμενοστρεφής σχεδίαση / αντικειμενοσχεσιακή απεικόνιση και REST API ναι. Δεν θα υπάρξει υποστήριξη.",
                    ]}
                  />
                </Topic>
                <SiteFooter>
                  <span />
                  <span>
                    Open eClass © 2003-2021 — <RedLink href="#terms">Όροι Χρήσης</RedLink>—{" "}
                    <RedLink href="#privacy">Πολιτική Απορρήτου</RedLink>
                  </span>
                  <a href="#top" aria-label="Top">
                    <svg width="24" height="24" viewBox="0 0 24 24"><rect x="2" y="2" width="20" height="20" rx="2.500" fill="none" stroke="#a6a6a6" strokeWidth="4" /><path d="M6 16.500h12L12 7z" fill="#a6a6a6" /></svg>
                  </a>
                </SiteFooter>
              </Content>
            </Page>
            <ScrollBar aria-hidden="true">
              <ScrollButton type="button" tabIndex={-1}>
                <svg width="7" height="4" viewBox="0 0 7 4"><path d="M0 4h7L3.500 0z" fill="#505050" /></svg>
              </ScrollButton>
              <ScrollSpace />
              <ScrollThumb />
              <ScrollButton type="button" tabIndex={-1}>
                <svg width="7" height="4" viewBox="0 0 7 4"><path d="M0 0h7L3.500 4z" fill="#a3a3a3" /></svg>
              </ScrollButton>
            </ScrollBar>
          </Viewport>
        </Browser>
      </Workspace>
    </Desktop>
  );
}
